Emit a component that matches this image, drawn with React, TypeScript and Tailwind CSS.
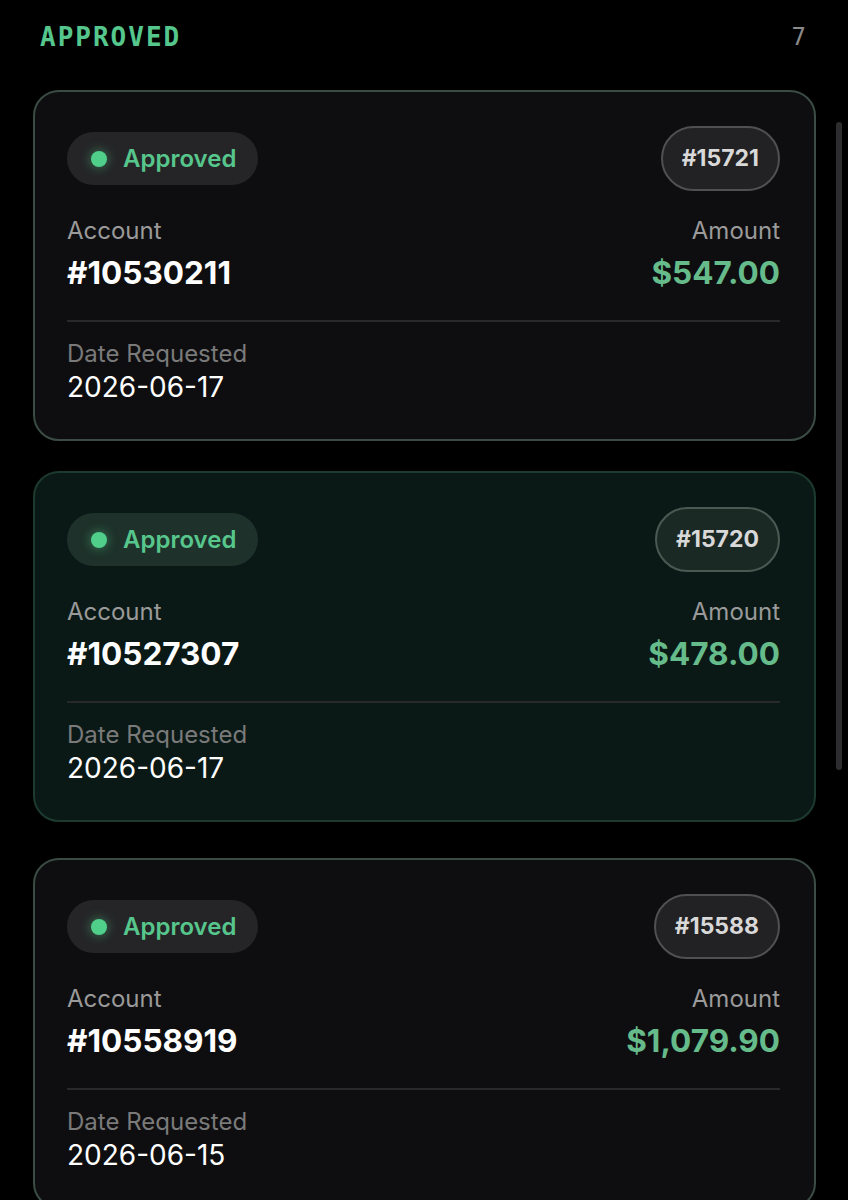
import React from 'react'

interface Request {
  id: string
  account: string
  amount: string
  date: string
  active?: boolean
}

const requests: Request[] = [
  { id: '#15721', account: '#10530211', amount: '$547.00', date: '2026-06-17' },
  { id: '#15720', account: '#10527307', amount: '$478.00', date: '2026-06-17', active: true },
  { id: '#15588', account: '#10558919', amount: '$1,079.90', date: '2026-06-15' },
]

function classNames(...classes: any) {
  return classes.filter(Boolean).join(' ')
}

function RequestCard({ item }: { item: Request }) {
  return (
    <div
      className={classNames(
        item.active
          ? 'bg-[#0a1916] border-[#1d3a2f] -translate-y-[3px]'
          : 'bg-[#0e0e10] border-[#3a4c43]',
        'border-2 rounded-[26px] pl-[32px] pr-[34px] pt-[34px] pb-[35px]'
      )}
    >
      {/** Status + id */}
      <div className="flex items-center justify-between h-[65px]">
        <div
          className={classNames(
            item.active ? 'bg-[#1e312a]' : 'bg-[#252527]',
            'flex items-center h-[53px] rounded-full pl-[24px] pr-[22px]'
          )}
        >
          <span className="w-4 h-4 rounded-full bg-[#4fcf8a] shadow-[0_0_10px_2px_rgba(79,207,138,0.35)]" />
          <span className="ml-[16px] text-[24px] leading-[32px] font-semibold text-[#57c68c]">Approved</span>
        </div>
        <div
          className={classNames(
            item.active ? 'bg-[#1b2925] border-[#4a5a53]' : 'bg-[#222224] border-[#505052]',
            'h-[65px] flex items-center rounded-full border-2 px-[19px] text-[23px] font-bold text-[#d9d9d9]'
          )}
        >
          {item.id}
        </div>
      </div>

      {/** Account / amount */}
      <div className="flex justify-between mt-[24px]">
        <div>
          <div className="text-[24px] leading-[32px] text-[#9a9a9a]">Account</div>
          <div className="mt-[6px] text-[31.5px] leading-[40px] font-bold text-white">{item.account}</div>
        </div>
        <div className="text-right">
          <div className="text-[24px] leading-[32px] text-[#9a9a9a]">Amount</div>
          <div className="mt-[6px] text-[31.5px] leading-[40px] font-bold text-[#66bb8b]">{item.amount}</div>
        </div>
      </div>

      <div className="mt-[27px] h-[2px] bg-[#29292b]" />

      {/** Date */}
      <div className="mt-[16px]">
        <div className="text-[24px] leading-[32px] text-[#7a7a7a]">Date Requested</div>
        <div className="text-[28px] leading-[34px] text-white">{item.date}</div>
      </div>
    </div>
  )
}

export default function App() {
  return (
    <div
      className="relative min-h-[1200px] h-[1200px] overflow-hidden bg-black"
      style={{ fontFamily: 'Inter, "Noto Sans", sans-serif' }}
    >
      <div className="pl-[33px] pr-[32px] pt-[21px]">
        {/** Section header */}
        <div className="flex items-center justify-between pl-[7px] pr-[10px] h-[32px]">
          <span
            className="text-[26px] leading-[32px] font-bold tracking-[2px] text-[#55c78d]"
            style={{ fontFamily: '"DejaVu Sans Mono", "Liberation Mono", monospace' }}
          >
            APPROVED
          </span>
          <span
            className="text-[24px] leading-[32px] text-[#8a8a8a]"
            style={{ fontFamily: '"DejaVu Sans Mono", "Liberation Mono", monospace' }}
          >
            7
          </span>
        </div>

        <div className="mt-[37px] flex flex-col gap-[33px]">
          {requests.map((item) => (
            <RequestCard key={item.id} item={item} />
          ))}
        </div>
      </div>

      {/** scrollbar thumb */}
      <div className="absolute left-[836px] top-[122px] w-[6px] h-[648px] rounded-full bg-[#2d2d2f]" />
    </div>
  )
}
